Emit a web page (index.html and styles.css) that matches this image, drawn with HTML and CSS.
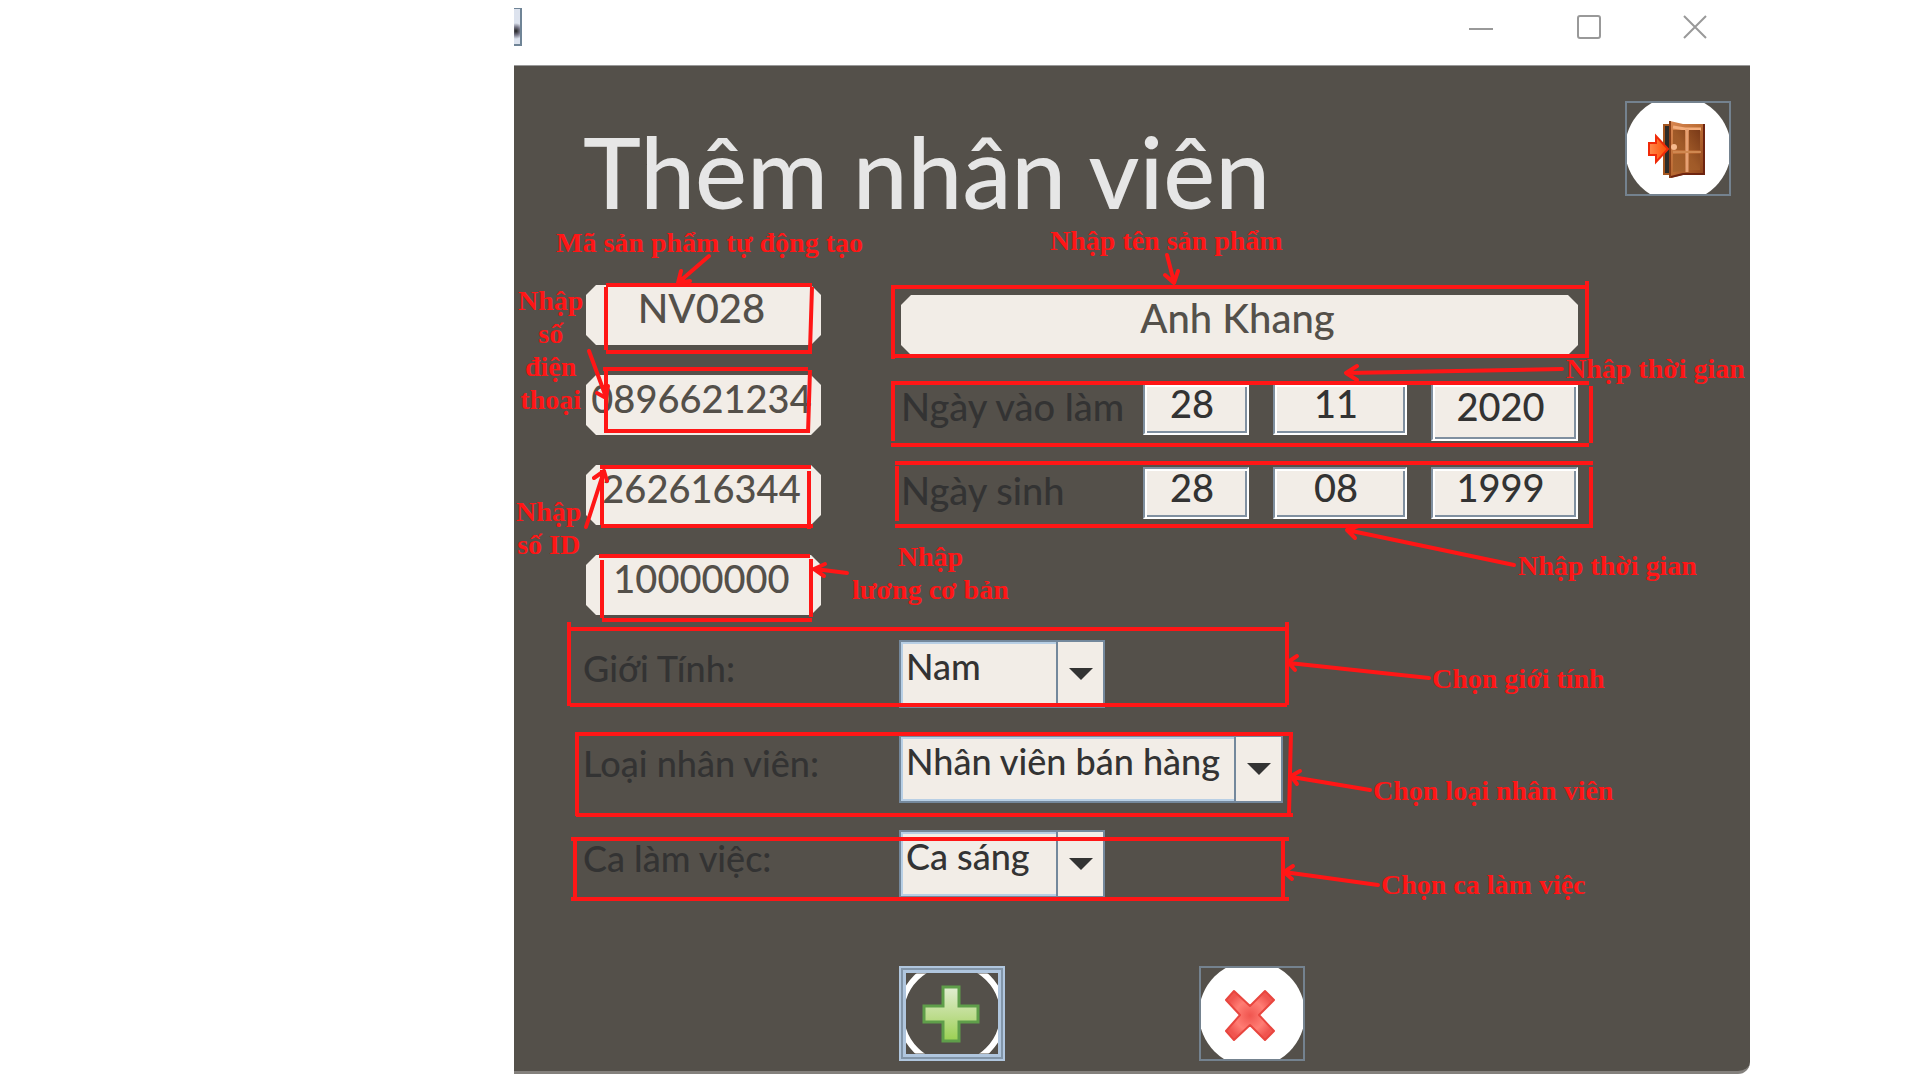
FILE: index.html
```html
<!DOCTYPE html>
<html lang="vi">
<head>
<meta charset="utf-8">
<title>Thêm nhân viên</title>
<link rel="stylesheet" href="styles.css">
</head>
<body>
<main class="window">
  <header class="titlebar">
    <span class="app-icon"></span>
    <div class="window-controls">
      <button type="button" aria-label="Thu nhỏ"><svg viewBox="0 0 24 24"><path d="M0 14H24"/></svg></button>
      <button type="button" aria-label="Phóng to"><svg viewBox="0 0 24 24"><rect x="1" y="1" width="22" height="22" rx="2"/></svg></button>
      <button type="button" aria-label="Đóng"><svg viewBox="0 0 24 24"><path d="M1 1L23 23M23 1L1 23"/></svg></button>
    </div>
  </header>

  <form class="panel">
    <div class="heading">
      <h1>Thêm nhân viên</h1>
      <button type="button" class="icon-button" aria-label="Thoát">
        <svg viewBox="0 0 106 94">
          <defs>
            <linearGradient id="wood" x1="0" y1="0" x2="1" y2="1"><stop offset="0" stop-color="#d98752"/><stop offset=".5" stop-color="#b96a32"/><stop offset="1" stop-color="#8a3f18"/></linearGradient>
            <linearGradient id="pane" x1="1" y1="0" x2="0" y2="1"><stop offset="0" stop-color="#7a3a18"/><stop offset=".5" stop-color="#a05a28"/><stop offset="1" stop-color="#a8642e"/></linearGradient>
            <linearGradient id="arrow" x1="0" y1="0" x2="1" y2="0"><stop offset="0" stop-color="#ff8a4a"/><stop offset="1" stop-color="#ff4a00"/></linearGradient>
          </defs>
          <circle cx="53" cy="47" r="53" fill="#fff"/>
          <rect x="38" y="22" width="42" height="51" fill="#a4561f"/>
          <rect x="40" y="24" width="8" height="47" fill="#2c2b28"/>
          <path d="M45 19L58 22H80V73H58L45 76Z" fill="url(#wood)"/>
          <path d="M45 19V76" stroke="#8a3f18" stroke-width="2"/>
          <path d="M46 75L58 72H79V22" fill="none" stroke="#6e2410" stroke-width="2"/>
          <path d="M48 25L60 27H76" fill="none" stroke="#f3ad7c" stroke-width="3"/>
          <path d="M48 28H60V48H48ZM64 28H75V48H64ZM48 52H60V69L48 70ZM64 52H75V68H64Z" fill="url(#pane)"/>
          <path d="M62 27V70" stroke="#e6a173" stroke-width="3"/>
          <path d="M48 50H76" stroke="#d08850" stroke-width="2"/>
          <circle cx="49" cy="45" r="3" fill="#f6b98c"/>
          <path d="M24 41H31V34L43 47L31 60V53H24Z" fill="url(#arrow)" stroke="#f02a08" stroke-width="2"/>
        </svg>
      </button>
    </div>

    <div class="details">
      <div class="codes">
        <input class="field large" aria-label="Mã nhân viên" value="NV028">
        <input class="field" aria-label="Số điện thoại" value="0896621234">
        <input class="field" aria-label="Số ID" value="262616344">
        <input class="field" aria-label="Lương cơ bản" value="10000000">
      </div>
      <div class="profile">
        <input class="field large" aria-label="Tên" value="Anh Khang">
        <div class="dates">
          <label for="start-day">Ngày vào làm</label>
          <input id="start-day" class="date" value="28">
          <input class="date" aria-label="Tháng vào làm" value="11">
          <input class="date tall" aria-label="Năm vào làm" value="2020">
          <label for="birth-day">Ngày sinh</label>
          <input id="birth-day" class="date" value="28">
          <input class="date" aria-label="Tháng sinh" value="08">
          <input class="date" aria-label="Năm sinh" value="1999">
        </div>
      </div>
    </div>

    <div class="choices">
      <label for="gender">Giới Tính:</label>
      <span class="combo"><select id="gender"><option>Nam</option></select></span>
      <label for="role">Loại nhân viên:</label>
      <span class="combo wide"><select id="role"><option>Nhân viên bán hàng</option></select></span>
      <label for="shift">Ca làm việc:</label>
      <span class="combo"><select id="shift"><option>Ca sáng</option></select></span>
    </div>

    <div class="actions">
      <button type="button" class="icon-button focused" aria-label="Thêm">
        <svg viewBox="0 0 106 94">
          <defs><linearGradient id="leaf" x1="0" y1="0" x2="0" y2="1"><stop offset="0" stop-color="#e2eed2"/><stop offset=".55" stop-color="#bcdc8c"/><stop offset="1" stop-color="#9ad052"/></linearGradient></defs>
          <circle cx="53" cy="47" r="51" fill="none" stroke="#fff" stroke-width="6"/>
          <path d="M44 20H60V39H79V55H60V74H44V55H25V39H44Z" fill="url(#leaf)" stroke="#5f9e4a" stroke-width="3"/>
        </svg>
      </button>
      <button type="button" class="icon-button" aria-label="Hủy">
        <svg viewBox="0 0 106 94">
          <defs><radialGradient id="coral"><stop offset="0" stop-color="#f0554f"/><stop offset=".6" stop-color="#ff7d74"/><stop offset="1" stop-color="#f0554f"/></radialGradient></defs>
          <circle cx="53" cy="47" r="53" fill="#fff"/>
          <path d="M35 24L51 39L66 24L75 33L60 48L75 64L66 73L51 58L35 73L27 64L41 48L27 33Z" fill="url(#coral)" stroke="#e8463f" stroke-width="2" stroke-linejoin="round"/>
        </svg>
      </button>
    </div>
  </form>

  <div class="notes">
    <svg viewBox="514 0 1236 1074" width="1236" height="1074">
      <g class="marks">
        <path d="M606 285H812M606 287V350M606 352H812M812 287L810 350"/>
        <path d="M603 369H808M606 370V431M604 431H808M810 370L808 433"/>
        <path d="M600 467H811M602 470V525M601 526H813M809 471V529"/>
        <path d="M599 556H810M602 560V618M602 620H812M811 559V617"/>
        <path d="M893 285V359M891 287H1589M891 356H1588M1587 281V358"/>
        <path d="M891 383H1589M893 381V441M891 445H1589M1591 386V443"/>
        <path d="M895 463H1593M897 466V521M895 526H1593M1591 467V524"/>
        <path d="M569 622V706M570 629H1288M570 705H1287M1287 622V705"/>
        <path d="M576 734H1293M577 732V816M576 815H1293M1291 733L1289 814"/>
        <path d="M571 839H1289M575 840V898M571 899H1289M1283 840V898"/>
      </g>
      <g class="marks arrows">
        <path d="M709 256L679 282M681 271L678 283L690 281"/>
        <path d="M1167 255L1174 282M1165 275L1174 283L1178 271"/>
        <path d="M589 351L606 397M597 393L606 398L608 386"/>
        <path d="M586 527L604 471M594 478L604 471L607 481"/>
        <path d="M847 573L815 569M825 564L814 569L824 576"/>
        <path d="M1562 369L1347 373M1357 366L1346 373L1357 380"/>
        <path d="M1514 565L1347 530M1358 526L1347 530L1355 538"/>
        <path d="M1429 678L1289 663M1297 656L1288 662L1295 670"/>
        <path d="M1370 790L1292 777M1300 771L1291 776L1297 784"/>
        <path d="M1378 885L1284 872M1293 866L1284 872L1292 879"/>
      </g>
    </svg>
    <p class="note note-code">Mã sản phẩm tự động tạo</p>
    <p class="note note-name">Nhập tên sản phẩm</p>
    <p class="note note-phone">Nhập<br>số<br>điện<br>thoại</p>
    <p class="note note-id">Nhập<br>số ID</p>
    <p class="note note-salary">Nhập<br>lương cơ bản</p>
    <p class="note note-start">Nhập thời gian</p>
    <p class="note note-birth">Nhập thời gian</p>
    <p class="note note-gender">Chọn giới tính</p>
    <p class="note note-role">Chọn loại nhân viên</p>
    <p class="note note-shift">Chọn ca làm việc</p>
  </div>
</main>
</body>
</html>
```
FILE: styles.css
```css
* { box-sizing: border-box; }

body {
  margin: 0;
  background: #fff;
  color: #333;
  font-family: Lato, "Open Sans", sans-serif;
  font-size: 38px;
  font-weight: 500;
  line-height: 46px;
}

h1, p { margin: 0; }

input, select, button {
  margin: 0;
  padding: 0;
  border: 0;
  border-radius: 0;
  background: none;
  color: inherit;
  font: inherit;
}

.window {
  position: relative;
  margin: 0 170px 0 514px;
}

.titlebar {
  display: flex;
  justify-content: space-between;
  height: 65px;
  padding-right: 43px;
}

.app-icon {
  width: 8px;
  height: 38px;
  margin-top: 8px;
  border: solid #6f8496;
  border-width: 1px 2px 2px 0;
  background: radial-gradient(circle at 2px 22px, #222 0, #778 4px, #dde3ee 8px);
}

.window-controls {
  display: flex;
  gap: 80px;
  padding-top: 15px;
}

.window-controls button { width: 24px; height: 24px; }
.window-controls button:first-child { margin-right: 2px; }

.window-controls svg {
  display: block;
  fill: none;
  stroke: #999;
  stroke-width: 2;
}

.window-controls button + button { margin-left: 2px; }

.panel {
  display: block;
  padding: 35px 19px 10px 69px;
  border-top: 1px solid #999;
  border-bottom: 3px solid #83807c;
  border-bottom-right-radius: 12px;
  background: #54504a;
}

.heading {
  display: flex;
  justify-content: space-between;
  align-items: flex-start;
  height: 184px;
}

h1 {
  padding-top: 21px;
  color: #e6e6e6;
  font-size: 98px;
  font-weight: 500;
  line-height: 98px;
  white-space: nowrap;
}

.icon-button {
  flex: none;
  width: 106px;
  height: 95px;
  border: 2px solid #74828f;
  overflow: hidden;
}

.icon-button svg {
  display: block;
  width: 106px;
  height: 94px;
  margin: -2px;
}

.focused { box-shadow: inset 0 0 0 2px #8295a8, inset 0 0 0 5px #b0c6de; border-color: #b0c6de; }
.focused svg { clip-path: inset(7px); }

.details {
  display: flex;
  gap: 80px;
  margin-left: 3px;
}

.codes {
  display: flex;
  flex-direction: column;
  gap: 30px;
  width: 235px;
}

.field {
  width: 100%;
  height: 60px;
  padding: 0 4px 14px 0;
  background: #f2ede7;
  color: #54504a;
  text-align: center;
  clip-path: polygon(10px 0, calc(100% - 10px) 0, 100% 10px, 100% calc(100% - 10px), calc(100% - 10px) 100%, 10px 100%, 0 calc(100% - 10px), 0 10px);
}

.large { font-size: 40px; }

.profile {
  width: 677px;
  padding-top: 10px;
}

.dates {
  display: grid;
  grid-template-columns: 218px 106px 134px 147px;
  column-gap: 24px;
  grid-template-rows: 84px 60px;
  align-items: start;
  margin-top: 28px;
  white-space: nowrap;
}

.date {
  width: 100%;
  height: 52px;
  padding: 0 8px 12px 0;
  border: 2px solid #8090a0;
  border-color: #8090a0 #fff #fff #8090a0;
  background: #f2ede7;
  box-shadow: inset 2px 2px #fff, inset -2px -2px #8090a0;
  text-align: center;
}

.tall { height: 58px; }

.choices {
  display: grid;
  grid-template-columns: 236px 1fr;
  grid-template-rows: 68px 68px 68px;
  gap: 27px 80px;
  margin-top: 25px;
  font-size: 36px;
}

.choices label { padding-top: 5px; white-space: nowrap; }

.combo {
  position: relative;
  width: 206px;
  height: 68px;
}

.wide { width: 384px; }

.combo select {
  width: 100%;
  height: 100%;
  padding: 0 48px 16px 5px;
  border: 2px solid #74889c;
  background: #f2ede7;
  box-shadow: inset 2px 2px #b8cfe5, inset 0 -2px #b8cfe5;
  appearance: none;
}

.combo::before {
  content: "";
  position: absolute;
  top: 2px;
  right: 2px;
  bottom: 2px;
  width: 45px;
  border-left: 2px solid #74889c;
  background: #f2ede7;
  pointer-events: none;
}

.combo::after {
  content: "";
  position: absolute;
  top: 28px;
  right: 12px;
  border: 12px solid transparent;
  border-top-color: #333;
  border-bottom: 0;
  pointer-events: none;
}

.actions {
  display: flex;
  gap: 194px;
  padding: 68px 0 0 316px;
}

/* Annotation layer drawn over the form */
.notes {
  position: absolute;
  top: 0;
  left: 0;
  color: #ff1616;
  font-family: "Liberation Serif", serif;
  font-size: 28px;
  font-weight: 700;
  line-height: 33px;
  text-align: center;
  white-space: nowrap;
  pointer-events: none;
}

.notes svg { display: block; }

.marks {
  fill: none;
  stroke: #ff1616;
  stroke-width: 4;
}

.arrows { stroke-linecap: round; stroke-linejoin: round; }

.note { position: absolute; }
.note-code { left: 42px; top: 226px; }
.note-name { left: 536px; top: 224px; }
.note-phone { left: 4px; top: 284px; }
.note-id { left: 2px; top: 495px; }
.note-salary { left: 338px; top: 540px; }
.note-start { left: 1052px; top: 352px; }
.note-birth { left: 1004px; top: 549px; }
.note-gender { left: 918px; top: 662px; }
.note-role { left: 859px; top: 774px; }
.note-shift { left: 867px; top: 868px; }
```
